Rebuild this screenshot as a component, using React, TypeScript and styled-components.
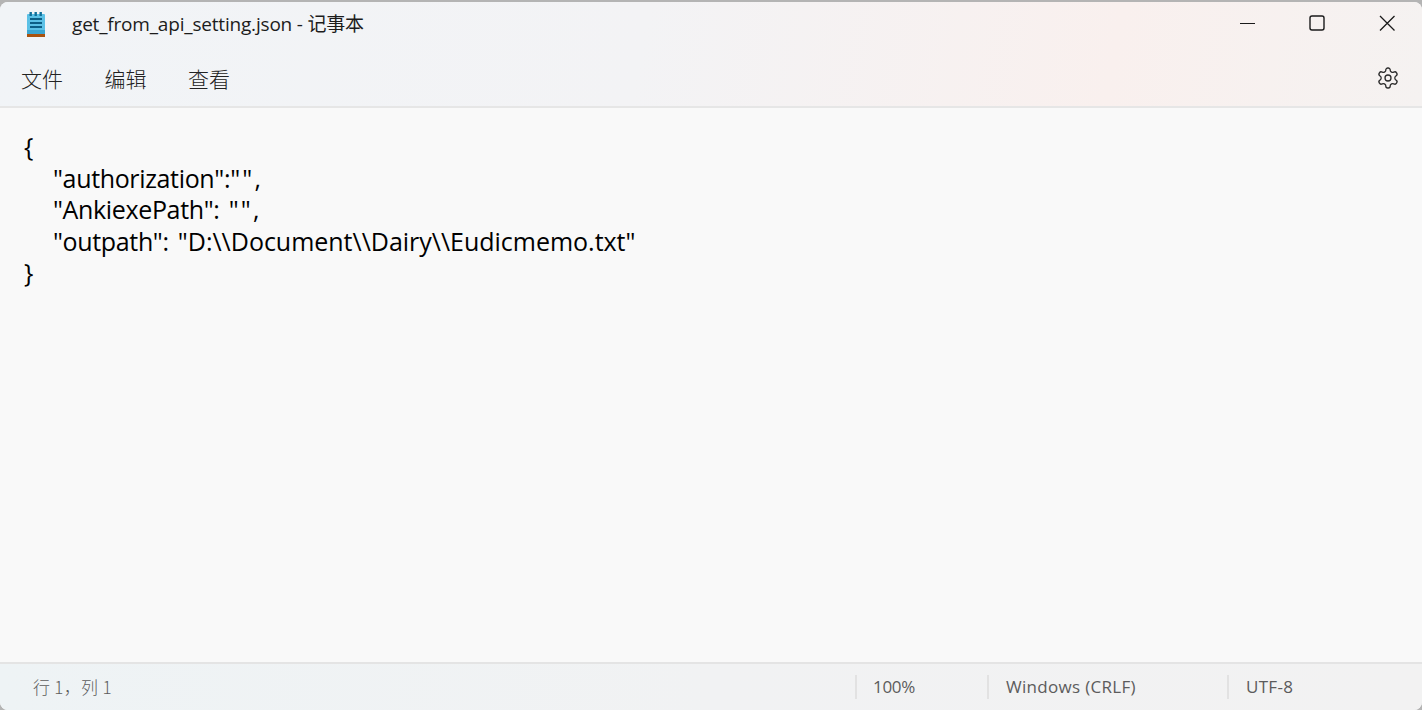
import React from 'react';
import styled, { createGlobalStyle } from 'styled-components';

const UI_FONT = '"Open Sans", "Noto Sans CJK SC", sans-serif';

const GlobalStyle = createGlobalStyle`
  html, body {
    margin: 0;
    padding: 0;
    height: 100%;
    overflow: hidden;
    background: #b4b4b4;
  }
`;

const Desktop = styled.div`
  width: 1422px;
  height: 710px;
  padding-top: 2px;
  box-sizing: border-box;
  background: #b4b4b4;
`;

const Window = styled.div`
  height: 708px;
  display: flex;
  flex-direction: column;
  border-radius: 8px;
  overflow: hidden;
  background: #f9f9f9;
  font-family: ${UI_FONT};
`;

const Header = styled.header`
  height: 104px;
  flex: none;
  display: flex;
  flex-direction: column;
  background: linear-gradient(100deg, #f1f4f7 0%, #f3f3f5 45%, #f9f0ee 78%, #f5f2f1 100%);
  border-bottom: 2px solid #e6e6e6;
`;

const TitleBar = styled.div`
  height: 46px;
  box-sizing: border-box;
  padding: 0 0 5px 24px;
  display: flex;
  align-items: center;
`;

const AppIcon = styled.svg`
  width: 24px;
  height: 26px;
  flex: none;
  margin-top: 5px;
`;

const Title = styled.div`
  margin-left: 24px;
  font-size: 19px;
  letter-spacing: -0.19px;
  color: #1c1c1c;
  white-space: nowrap;
`;

const WindowControls = styled.div`
  margin-left: auto;
  display: flex;
  align-items: center;
  padding-right: 23px;
  gap: 46px;
`;

const ControlIcon = styled.svg`
  width: 24px;
  height: 24px;
  display: block;
`;

const MenuBar = styled.nav`
  flex: 1;
  display: flex;
  align-items: center;
  padding: 2px 22px 0 21px;
  gap: 41.5px;
`;

const MenuItem = styled.span`
  font-size: 21px;
  color: #222;
  font-family: "Noto Sans CJK SC", sans-serif;
  font-weight: 300;
  line-height: 1;
`;

const Settings = styled.svg`
  margin-left: auto;
  width: 24px;
  height: 24px;
`;

const Editor = styled.main`
  flex: 1;
  padding: 23px 24px 0;
  font-size: 25px;
  line-height: 31.5px;
  letter-spacing: -0.35px;
  word-spacing: 3px;
  color: #000;
  background: #f9f9f9;
  font-family: "Open Sans", sans-serif;
`;

const Line = styled.div<{ $indent?: boolean }>`
  white-space: pre;
  padding-left: ${p => (p.$indent ? '29px' : '0')};
`;

// the reference spaces string values a little wider than keys
const Value = styled.span<{ $empty?: boolean }>`
  letter-spacing: ${p => (p.$empty ? '2.2px' : '-0.02px')};
`;

const StatusBar = styled.footer`
  height: 48px;
  flex: none;
  display: flex;
  align-items: center;
  box-sizing: border-box;
  border-top: 2px solid #e4e4e4;
  background: linear-gradient(90deg, #eef3f5 0%, #f1f2f3 50%, #f2f2f2 100%);
  color: #5c5c5c;
  font-size: 17px;
`;

const StatusCell = styled.div<{ $width: number; $pad: number; $divider?: boolean; $tight?: boolean }>`
  width: ${p => p.$width}px;
  flex: none;
  height: 24px;
  line-height: 24px;
  box-sizing: border-box;
  padding-left: ${p => p.$pad}px;
  border-left: ${p => (p.$divider ? '2px solid #e2e2e2' : 'none')};
  letter-spacing: ${p => (p.$tight ? '-0.3px' : '0.3px')};
  white-space: nowrap;
`;

const Position = styled.span`
  font-family: "Noto Sans CJK SC", sans-serif;
  font-weight: 300;
  font-size: 17px;
`;

const NotepadIcon = () => (
  <AppIcon viewBox="0 0 24 26">
    <rect x="3" y="2" width="18" height="22" rx="1" fill="#5cc1e6" />
    <rect x="3" y="18" width="18" height="4" fill="#3aa6d2" />
    <rect x="3" y="22" width="18" height="3" fill="#a9520f" />
    <rect x="5.5" y="0" width="2.4" height="4" fill="#0f6f9a" />
    <rect x="10.5" y="0" width="2.4" height="4" fill="#0f6f9a" />
    <rect x="15.5" y="0" width="2.4" height="4" fill="#0f6f9a" />
    <rect x="6" y="6" width="12" height="2" fill="#0d5f86" />
    <rect x="6" y="10" width="12" height="2" fill="#0d5f86" />
    <rect x="6" y="14" width="12" height="2" fill="#0d5f86" />
  </AppIcon>
);

export default function App() {
  return (
    <Desktop>
      <GlobalStyle />
      <Window>
        <Header>
          <TitleBar>
            <NotepadIcon />
            <Title>get_from_api_setting.json - 记事本</Title>
            <WindowControls>
              <ControlIcon viewBox="0 0 24 24">
                <path d="M5 12.5h15" stroke="#1a1a1a" strokeWidth="1.2" fill="none" />
              </ControlIcon>
              <ControlIcon viewBox="0 0 24 24">
                <rect x="5" y="5" width="14" height="14" rx="2" stroke="#1a1a1a" strokeWidth="1.4" fill="none" />
              </ControlIcon>
              <ControlIcon viewBox="0 0 24 24">
                <path d="M5 5l14.5 14.5M19.5 5L5 19.5" stroke="#1a1a1a" strokeWidth="1.3" fill="none" />
              </ControlIcon>
            </WindowControls>
          </TitleBar>
          <MenuBar>
            <MenuItem>文件</MenuItem>
            <MenuItem>编辑</MenuItem>
            <MenuItem>查看</MenuItem>
            <Settings viewBox="0 0 24 24" fill="none" stroke="#2a2a2a" strokeWidth="1.3" strokeLinejoin="round">
              <path d="M12.22 2h-.44a2 2 0 0 0-2 2v.18a2 2 0 0 1-1 1.73l-.43.25a2 2 0 0 1-2 0l-.15-.08a2 2 0 0 0-2.73.73l-.22.38a2 2 0 0 0 .73 2.73l.15.1a2 2 0 0 1 1 1.72v.51a2 2 0 0 1-1 1.74l-.15.09a2 2 0 0 0-.73 2.73l.22.38a2 2 0 0 0 2.73.73l.15-.08a2 2 0 0 1 2 0l.43.25a2 2 0 0 1 1 1.73V20a2 2 0 0 0 2 2h.44a2 2 0 0 0 2-2v-.18a2 2 0 0 1 1-1.73l.43-.25a2 2 0 0 1 2 0l.15.08a2 2 0 0 0 2.73-.73l.22-.39a2 2 0 0 0-.73-2.73l-.15-.08a2 2 0 0 1-1-1.74v-.5a2 2 0 0 1 1-1.74l.15-.09a2 2 0 0 0 .73-2.73l-.22-.38a2 2 0 0 0-2.73-.73l-.15.08a2 2 0 0 1-2 0l-.43-.25a2 2 0 0 1-1-1.73V4a2 2 0 0 0-2-2z" />
              <circle cx="12" cy="12" r="3" />
            </Settings>
          </MenuBar>
        </Header>
        <Editor>
          <Line>{'{'}</Line>
          <Line $indent>{'"authorization":'}<Value $empty>{'""'}</Value>{','}</Line>
          <Line $indent>{'"AnkiexePath": '}<Value $empty>{'""'}</Value>{','}</Line>
          <Line $indent>{'"outpath": '}<Value>{'"D:\\\\Document\\\\Dairy\\\\Eudicmemo.txt"'}</Value></Line>
          <Line>{'}'}</Line>
        </Editor>
        <StatusBar>
          <StatusCell $width={855} $pad={33}>
            <Position>行 1，列 1</Position>
          </StatusCell>
          <StatusCell $width={132} $pad={16} $divider $tight>100%</StatusCell>
          <StatusCell $width={240} $pad={17} $divider>Windows (CRLF)</StatusCell>
          <StatusCell $width={195} $pad={17} $divider>UTF-8</StatusCell>
        </StatusBar>
      </Window>
    </Desktop>
  );
}
